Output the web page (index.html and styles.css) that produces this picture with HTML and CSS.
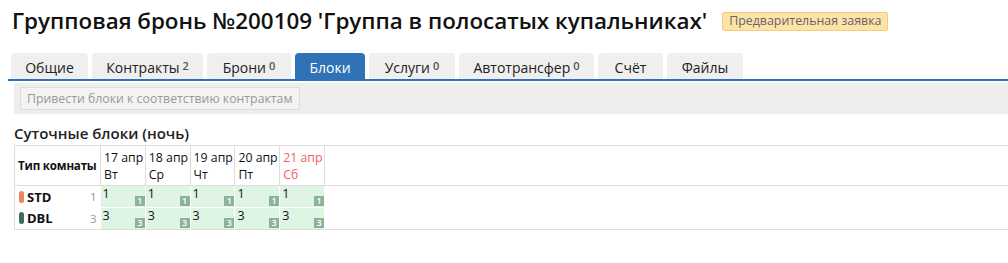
FILE: index.html
```html
<!DOCTYPE html>
<html lang="ru">
<head>
<meta charset="utf-8">
<link rel="stylesheet" href="styles.css">
</head>
<body>
<div class="page">
  <div class="head">
    <h1 class="title">Групповая бронь №200109 'Группа в полосатых купальниках'</h1>
    <span class="badge">Предварительная заявка</span>
  </div>
  <div class="tabs">
    <div class="tab w-gen">Общие</div>
    <div class="tab w-con">Контракты <sup>2</sup></div>
    <div class="tab w-bro">Брони <sup>0</sup></div>
    <div class="tab active w-blk">Блоки</div>
    <div class="tab w-usl">Услуги <sup>0</sup></div>
    <div class="tab w-avt">Автотрансфер <sup>0</sup></div>
    <div class="tab w-sch">Счёт</div>
    <div class="tab w-fil">Файлы</div>
  </div>
  <div class="toolbar">
    <button class="btn">Привести блоки к соответствию контрактам</button>
  </div>
  <h2 class="sub">Суточные блоки (ночь)</h2>
  <table class="grid">
    <thead>
      <tr class="hrow">
        <th class="rt">Тип комнаты</th>
        <th class="d">17 апр<br>Вт</th>
        <th class="d">18 апр<br>Ср</th>
        <th class="d">19 апр<br>Чт</th>
        <th class="d">20 апр<br>Пт</th>
        <th class="d we">21 апр<br>Сб</th>
        <th class="rest"></th>
      </tr>
    </thead>
    <tbody>
      <tr class="brow">
        <td class="rt"><div class="rtin"><span class="room"><i class="dot std"></i><b>STD</b></span><span class="cnt">1</span></div></td>
        <td class="c"><span class="v">1</span><span class="q">1</span></td>
        <td class="c"><span class="v">1</span><span class="q">1</span></td>
        <td class="c"><span class="v">1</span><span class="q">1</span></td>
        <td class="c"><span class="v">1</span><span class="q">1</span></td>
        <td class="c"><span class="v">1</span><span class="q">1</span></td>
        <td class="rest"></td>
      </tr>
      <tr class="brow">
        <td class="rt"><div class="rtin"><span class="room"><i class="dot dbl"></i><b>DBL</b></span><span class="cnt">3</span></div></td>
        <td class="c"><span class="v">3</span><span class="q">3</span></td>
        <td class="c"><span class="v">3</span><span class="q">3</span></td>
        <td class="c"><span class="v">3</span><span class="q">3</span></td>
        <td class="c"><span class="v">3</span><span class="q">3</span></td>
        <td class="c"><span class="v">3</span><span class="q">3</span></td>
        <td class="rest"></td>
      </tr>
    </tbody>
  </table>
</div>
</body>
</html>
```

FILE: styles.css
```css
* { box-sizing: border-box; }
html, body { margin: 0; padding: 0; background: #fff; }
body {
  font-family: "Open Sans", "Noto Sans", sans-serif;
  font-size: 13px;
  color: #333;
}
.page { padding: 0 0 0 8px; }
.head {
  display: flex;
  align-items: center;
  gap: 15px;
  padding: 6px 0 0 4px;
  height: 35px;
}
.title {
  margin: 0;
  font-size: 22.4px;
  font-weight: 600;
  color: #111;
  line-height: 28px;
  white-space: nowrap;
}
.badge {
  background: #fde3a7;
  border: 1px solid #f5cd7a;
  border-radius: 2px;
  color: #666;
  font-size: 12.4px;
  line-height: 16px;
  padding: 0 6px;
  height: 19px;
  display: inline-flex;
  align-items: center;
  margin-top: 1px;
  white-space: nowrap;
}
.tabs {
  display: flex;
  gap: 4px;
  padding-left: 3px;
  margin-top: 18px;
  border-bottom: 2px solid #2f73b6;
  height: 28px;
}
.tab {
  height: 26px;
  background: #efefef;
  border-radius: 4px 4px 0 0;
  display: flex;
  align-items: center;
  justify-content: center;
  color: #222;
  font-size: 14px;
  padding-top: 2px;
  white-space: nowrap;
}
.tab sup {
  font-size: 11px;
  font-weight: 600;
  color: #555;
  vertical-align: 0;
  position: relative;
  top: -2px;
  margin-left: 3px;
}
.tab.active { background: #2f73b6; color: #fff; }
.w-gen { width: 77px; }
.w-con { width: 111px; }
.w-bro { width: 84px; }
.w-blk { width: 70px; }
.w-usl { width: 86px; }
.w-avt { width: 135px; }
.w-sch { width: 65px; }
.w-fil { width: 76px; }
.toolbar {
  margin: 2px 0 0 6px;
  background: #eeeeee;
  height: 31px;
  padding: 4px 6px;
}
.btn {
  font-family: inherit;
  font-size: 12.3px;
  color: #999;
  background: #f3f3f3;
  border: 1px solid #dcdcdc;
  border-radius: 2px;
  height: 23px;
  width: 280px;
  padding: 0 6px;
  text-align: left;
  white-space: nowrap;
}
.sub {
  margin: 8px 0 0 6px;
  font-size: 15px;
  font-weight: 600;
  color: #222;
  line-height: 23px;
}
.grid {
  margin: 0 0 0 6px;
  width: calc(100% - 6px);
  border-collapse: collapse;
  table-layout: fixed;
  border-top: 1px solid #ddd;
  border-bottom: 1px solid #ddd;
  border-left: 1px solid #ddd;
  font-size: 12px;
}
.grid th, .grid td { padding: 0; }
.hrow { height: 40px; }
.brow { height: 22px; }
.grid thead th {
  border-right: 1px solid #ddd;
  border-bottom: 1px solid #ddd;
  text-align: left;
  vertical-align: middle;
  font-weight: 400;
}
.grid th.rt {
  width: 86px;
  font-weight: 700;
  padding-left: 3px;
  font-size: 11.6px;
  letter-spacing: -0.2px;
  color: #111;
  white-space: nowrap;
}
.grid th.d {
  width: 44.8px;
  padding: 0 0 0 3px;
  line-height: 17px;
  color: #111;
  font-size: 12.3px;
  white-space: nowrap;
  overflow: hidden;
}
.grid th.we { color: #f25d5d; }
.grid th.rest { border-right: 0; width: auto; }
.grid tbody td { vertical-align: top; }
.grid td.rt { padding: 0 4px 0 4px; vertical-align: middle; }
.rtin {
  display: flex;
  align-items: center;
  justify-content: space-between;
}
.room { display: flex; align-items: center; gap: 3px; }
.room b { font-size: 13px; font-weight: 700; color: #111; }
.dot {
  display: inline-block;
  width: 5px;
  height: 12px;
  border-radius: 3px;
}
.dot.std { background: #e8855c; }
.dot.dbl { background: #3e6b5b; }
.cnt { color: #999; font-size: 11.5px; }
.grid td.c {
  background: #dff5e3;
  border-right: 1px solid #fff;
  border-bottom: 1px solid #fff;
  position: relative;
}
.grid tbody tr:last-child td.c { border-bottom: 0; }
.v {
  display: block;
  padding-left: 2px;
  line-height: 15px;
  color: #111;
  font-size: 12.5px;
}
.q {
  position: absolute;
  right: 0;
  bottom: 1px;
  width: 10px;
  height: 10px;
  background: #8db29a;
  color: #fff;
  font-size: 9px;
  line-height: 10px;
  text-align: center;
  font-weight: 600;
}
```
